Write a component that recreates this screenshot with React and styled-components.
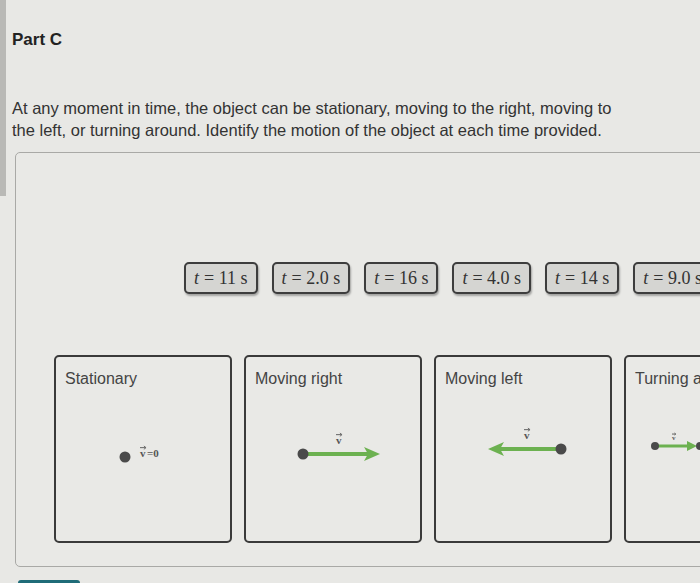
import React from "react";
import styled, { createGlobalStyle } from "styled-components";

const Global = createGlobalStyle`
  body {
    margin: 0;
    background: #e8e8e5;
    overflow: hidden;
    font-family: "Liberation Sans", Arial, sans-serif;
  }
`;

const Page = styled.div`
  display: flex;
  align-items: flex-start;
  width: 700px;
  height: 583px;
  overflow: hidden;
`;

const Rail = styled.div`
  flex: 0 0 6px;
  height: 196px;
  background: #b9b9b6;
`;

const Main = styled.div`
  flex: 1;
  padding: 30px 0 0 6px;
`;

const Heading = styled.h2`
  margin: 0;
  font-size: 17px;
  line-height: 20px;
  font-weight: bold;
  color: #222;
`;

const Prompt = styled.p`
  margin: 47px 0 0;
  font-size: 16.5px;
  line-height: 22px;
  color: #333;
  width: 612px;
`;

const Board = styled.div`
  margin: 11px 0 0 3px;
  width: 760px;
  border: 1px solid #a9a9a6;
  border-radius: 5px;
  padding: 109px 0 23px 38px;
  background: #e9e9e6;
`;

const Tray = styled.div`
  display: flex;
  gap: 14px;
  padding-left: 130px;
`;

const Chip = styled.div`
  height: 28px;
  padding: 0 8px;
  display: flex;
  align-items: center;
  border: 2px solid #3d3d3d;
  border-radius: 5px;
  background: #d5d5d2;
  box-shadow: 1px 2px 2px rgba(0, 0, 0, 0.3);
  font-family: "Liberation Serif", "Times New Roman", serif;
  font-size: 18px;
  color: #333;
  white-space: nowrap;

  & > i {
    margin-right: 5px;
  }
`;

const Bins = styled.div`
  display: flex;
  gap: 12px;
  margin-top: 61px;
`;

const Bin = styled.div`
  flex: 0 0 178px;
  height: 188px;
  box-sizing: border-box;
  border: 2px solid #3a3a3a;
  border-radius: 5px;
  display: flex;
  flex-direction: column;
`;

const BinLabel = styled.div`
  padding: 11px 9px 0;
  font-size: 16px;
  line-height: 21px;
  color: #444;
  white-space: nowrap;
`;

const Figure = styled.svg`
  display: block;
  width: 174px;
  height: 130px;
`;

const Footer = styled.div`
  display: flex;
  padding: 13px 0 0 6px;
`;

const SubmitButton = styled.button`
  width: 62px;
  height: 30px;
  border: none;
  border-radius: 3px;
  background: #1f6c78;
`;

const GREEN = "#6cb150";
const DOT = "#4a4a4a";

const VLabel = ({ x, y, size = 11 }) => (
  <g>
    <text
      x={x}
      y={y}
      fontFamily="Liberation Serif, serif"
      fontSize={size}
      fontWeight="bold"
      fill="#555"
    >
      v
    </text>
    <line x1={x} y1={y - size * 0.85} x2={x + size * 0.5} y2={y - size * 0.85} stroke="#555" strokeWidth="0.9" />
    <path d={`M${x + size * 0.35} ${y - size * 1.0} L${x + size * 0.55} ${y - size * 0.85} L${x + size * 0.35} ${y - size * 0.7}`} fill="none" stroke="#555" strokeWidth="0.8" />
  </g>
);

const Stationary = () => (
  <Figure viewBox="0 0 174 130">
    <circle cx="69" cy="68" r="5.5" fill={DOT} />
    <VLabel x={84} y={68} />
    <text x="91" y="68" fontFamily="Liberation Serif, serif" fontSize="11" fontWeight="bold" fill="#555">
      =0
    </text>
  </Figure>
);

const MovingRight = () => (
  <Figure viewBox="0 0 174 130">
    <line x1="57" y1="65" x2="124" y2="65" stroke={GREEN} strokeWidth="4" />
    <polygon points="118,58 134,65 118,72 122,65" fill={GREEN} />
    <circle cx="57" cy="65" r="5.5" fill={DOT} />
    <VLabel x={90} y={55} />
  </Figure>
);

const MovingLeft = () => (
  <Figure viewBox="0 0 174 130">
    <line x1="125" y1="60" x2="62" y2="60" stroke={GREEN} strokeWidth="4" />
    <polygon points="68,53 52,60 68,67 64,60" fill={GREEN} />
    <circle cx="125" cy="60" r="5.5" fill={DOT} />
    <VLabel x={88} y={50} />
  </Figure>
);

const Turning = () => (
  <Figure viewBox="0 0 174 130">
    <line x1="29" y1="57" x2="64" y2="57" stroke={GREEN} strokeWidth="3" />
    <polygon points="61,52 71,57 61,62" fill={GREEN} />
    <circle cx="29" cy="57" r="4" fill={DOT} />
    <circle cx="74" cy="57" r="4" fill={DOT} />
    <VLabel x={46} y={51} size={7} />
  </Figure>
);

const times = ["11", "2.0", "16", "4.0", "14", "9.0"];

const bins = [
  { label: "Stationary", Art: Stationary },
  { label: "Moving right", Art: MovingRight },
  { label: "Moving left", Art: MovingLeft },
  { label: "Turning around", Art: Turning },
];

export default function App() {
  return (
    <>
      <Global />
      <Page>
        <Rail />
        <Main>
          <Heading>Part C</Heading>
          <Prompt>
            At any moment in time, the object can be stationary, moving to the right, moving to
            the left, or turning around. Identify the motion of the object at each time provided.
          </Prompt>
          <Board>
            <Tray>
              {times.map((t) => (
                <Chip key={t}>
                  <i>t</i>= {t} s
                </Chip>
              ))}
            </Tray>
            <Bins>
              {bins.map(({ label, Art }) => (
                <Bin key={label}>
                  <BinLabel>{label}</BinLabel>
                  <Art />
                </Bin>
              ))}
            </Bins>
          </Board>
          <Footer>
            <SubmitButton aria-label="Submit" />
          </Footer>
        </Main>
      </Page>
    </>
  );
}
